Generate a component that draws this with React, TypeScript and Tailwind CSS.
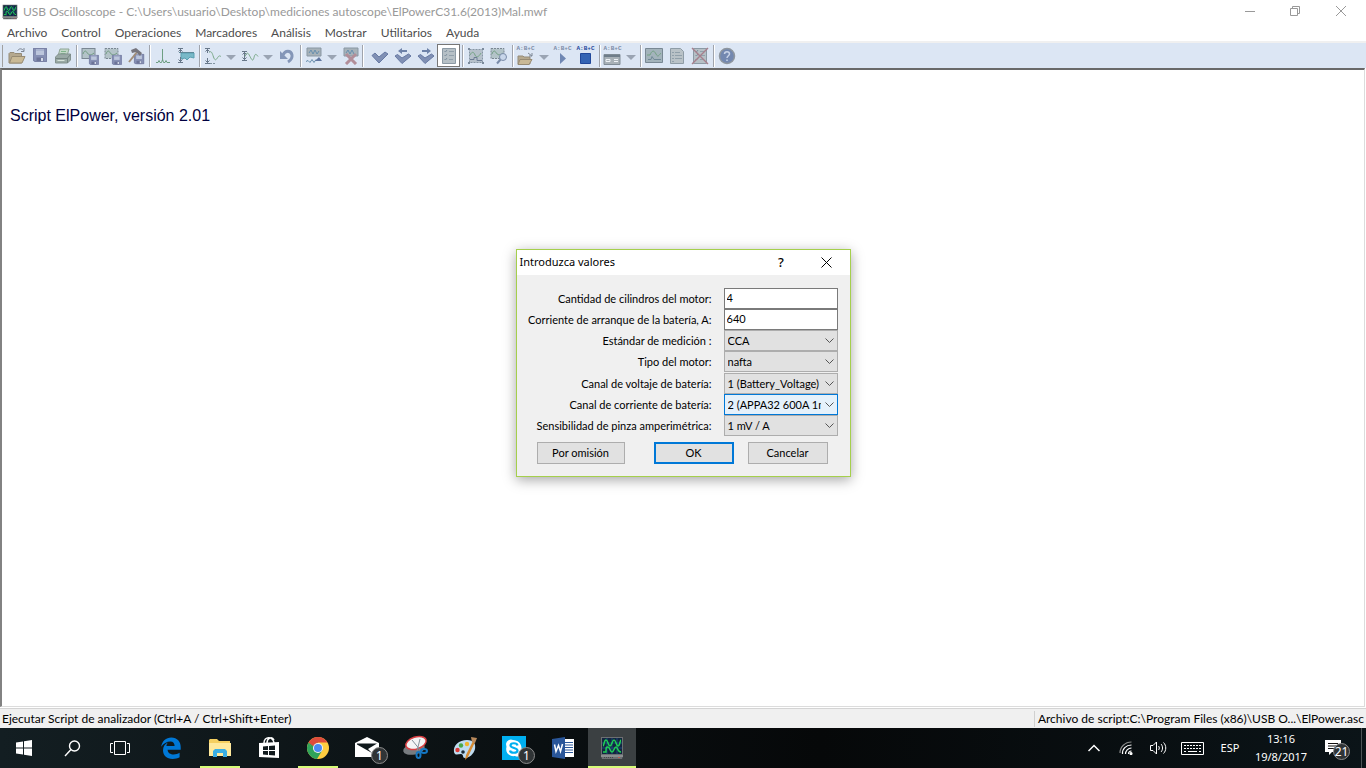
import { Fragment } from "react";
import type { ReactNode } from "react";

const menus = ["Archivo", "Control", "Operaciones", "Marcadores", "Análisis", "Mostrar", "Utilitarios", "Ayuda"];

/* ---------- toolbar drawings, 18x18 ---------- */

function Svg({ children }: { children: ReactNode }) {
  return (
    <svg viewBox="0 0 18 18" width="18" height="18" fill="none" aria-hidden="true">
      {children}
    </svg>
  );
}

const Floppy = ({ x = 0, y = 0, s = 1 }: { x?: number; y?: number; s?: number }) => (
  <g transform={`translate(${x} ${y}) scale(${s})`}>
    <path d="M0 0h14v14H1.5L0 12.500z" fill="#8690b4" />
    <path d="M3 0h8v7H3z" fill="#bcc6dc" />
    <path d="M3 2h8" stroke="#98a3c4" />
    <path d="M3.500 9.500h7V14h-7z" fill="#6c7498" />
    <path d="M8 10h2v3H8z" fill="#d5dbe9" />
    <path d="M.5.5h13v13H2L.5 12z" stroke="#7a82a6" />
  </g>
);

const Folder = () => (
  <g>
    <path d="M1 6.500l1-1h4l1 1h6.500V16H1z" fill="#b5a88e" stroke="#958b78" />
    <path d="M4 9.500h13L14 16H1.500z" fill="#c9b996" stroke="#978b74" />
  </g>
);

const Screen = ({ dashed = false }: { dashed?: boolean }) => (
  <g>
    <rect x="1" y="1.500" width="13" height="10" fill="#b3c3c8" stroke="#7a8793" strokeDasharray={dashed ? "2 1" : undefined} />
    <path d="M2 7c1-3 2.500-4 4-1.500S9.500 9 13 6" stroke="#6f9c80" />
  </g>
);

const Page = () => (
  <g>
    <path d="M2.500 1.500h13v15h-13z" fill="#b6c0c6" stroke="#8c9aa5" />
    <path d="M4.500 4l1 1 1.500-2M4.500 8l1 1 1.500-2M4.500 12l1 1 1.500-2" stroke="#7f909e" />
    <path d="M9 4.500h5M9 8.500h5M9 12.500h4" stroke="#91a0ab" />
  </g>
);

const Updown = ({ x = 3, top = 1, bottom = 16 }: { x?: number; top?: number; bottom?: number }) => (
  <path
    d={`M${x - 2} ${top + 0.5}h5M${x - 2} ${bottom + 0.5}h5M${x + 0.5} ${top}v5M${x + 0.5} ${bottom}v-5M${x - 1.5} ${top + 3.5}l2-2 2 2M${x - 1.5} ${bottom - 2.5}l2 2 2-2`}
    stroke="#68788a"
  />
);

const Check = ({ arrow }: { arrow?: "left" | "right" }) => (
  <g>
    <path
      d={arrow ? "M1 9l2.500-1.500L8 11l6.500-4L17 9l-9 7.500z" : "M1 8.500l3-2.500 4 4 6-5 3 2-9 9z"}
      fill="#8090b4"
      stroke="#6679a3"
    />
    {arrow === "left" && <path d="M4 4l4-3v2h5v2H8v2z" fill="#6e82a8" />}
    {arrow === "right" && <path d="M14 4l-4-3v2H5v2h5v2z" fill="#6e82a8" />}
  </g>
);

const icons: Record<string, ReactNode> = {
  open: (
    <Svg>
      <Folder />
      <path d="M9.500 4c1-2.500 4-3 6-.500M16 1v3.500h-3" stroke="#7d8694" />
    </Svg>
  ),
  save: (
    <Svg>
      <Floppy x={2} y={1} />
    </Svg>
  ),
  print: (
    <Svg>
      <path d="M6 2h9l-2 7H4z" fill="#c3d8c8" stroke="#8fa596" />
      <path d="M7 4.500h5M6.500 6.500h5" stroke="#80b48c" />
      <path d="M1.500 10l3-3h12v6l-3 3h-12z" fill="#9aaaa6" stroke="#82918f" />
      <path d="M2 11.500h11M13.500 16v-5l3-3.500" stroke="#758582" />
      <path d="M3.500 13.500h7" stroke="#d7e3dc" />
    </Svg>
  ),
  saveScreen: (
    <Svg>
      <Screen />
      <Floppy x={8} y={8} s={0.7} />
    </Svg>
  ),
  savePart: (
    <Svg>
      <Screen dashed />
      <Floppy x={8} y={8} s={0.7} />
    </Svg>
  ),
  saveTool: (
    <Svg>
      <Floppy x={7} y={7} s={0.72} />
      <path d="M10 5L2 15" stroke="#a28e78" strokeWidth="2" />
      <path d="M4 3l5-2 6 5-2 3-4-4-4 1z" fill="#76757d" />
    </Svg>
  ),
  spike: (
    <Svg>
      <path d="M2 15.500h2l1-2 1 2h1.500l1-3M8.500 2v12M8.500 12l1 3.500H11l1-2 1 2h3" stroke="#6e9f83" />
    </Svg>
  ),
  band: (
    <Svg>
      <path d="M4 6h13v5l-4-1-3 3-2-2-4 1z" fill="#79b9c8" stroke="#5ba0b2" />
      <path d="M2 5.500h15" stroke="#5d8898" />
      <Updown x={3} top={1} bottom={15} />
    </Svg>
  ),
  waveTall: (
    <Svg>
      <path d="M5 5.500c2-2 3 0 4 3s2 6 4 3 2-3 4-2" stroke="#79a987" />
      <path d="M6 16.500h6" stroke="#8295a2" strokeDasharray="2 1" />
      <Updown />
    </Svg>
  ),
  waveFlat: (
    <Svg>
      <path d="M4 9.500c2-5 3-4 5 0s3 5 4 1 2-4 4-1" stroke="#79a987" />
      <Updown x={3} top={4} bottom={13} />
    </Svg>
  ),
  undo: (
    <Svg>
      <path d="M5 8c2-5 8-5 9 0 .5 3.500-1.500 5.500-4 7" stroke="#8496b8" strokeWidth="3" />
      <path d="M2 4v8h8z" fill="#8496b8" />
    </Svg>
  ),
  marks: (
    <Svg>
      <path d="M2 1h14v8H2z" fill="#a7b2b9" stroke="#8997a3" />
      <path d="M4 6l2-3 2 4 2-4 2 4 2-3" stroke="#678faf" />
      <path d="M1 14.500l2-1 2 2 2-3 2 3 2-3" stroke="#668dac" />
      <path d="M10 14l4-4 3 4z" fill="#6076a0" />
    </Svg>
  ),
  marksOff: (
    <Svg>
      <path d="M2 1h14v8H2z" fill="#a7b2b9" stroke="#8997a3" />
      <path d="M4 6l2-3 2 4 2-4 2 4" stroke="#678faf" />
      <path d="M4 7l10 10M14 7L4 17" stroke="#b18e99" strokeWidth="3" />
    </Svg>
  ),
  check: (
    <Svg>
      <Check />
    </Svg>
  ),
  checkBack: (
    <Svg>
      <Check arrow="left" />
    </Svg>
  ),
  checkNext: (
    <Svg>
      <Check arrow="right" />
    </Svg>
  ),
  list: (
    <Svg>
      <Page />
    </Svg>
  ),
  frame: (
    <Svg>
      <path d="M2.500 2.500h13v13h-13z" fill="#b6c1cb" stroke="#8796a5" strokeDasharray="2 1" />
      <path d="M1 1h2v2H1zM15 1h2v2h-2zM1 15h2v2H1zM15 15h2v2h-2z" fill="#7c8b9c" />
      <path d="M3 8c2-4 4-3 5 0s4 2 6-2" stroke="#76a586" />
      <path d="M3 12.500h4v-2h3v3h5" stroke="#6d7d95" />
    </Svg>
  ),
  zoom: (
    <Svg>
      <Screen dashed />
      <circle cx="13" cy="10" r="3.500" fill="#c8d6ea" stroke="#7a8ca9" />
      <path d="M10.500 12.500L7 16.500" stroke="#7a8ca9" strokeWidth="2" />
    </Svg>
  ),
  view: (
    <Svg>
      <path d="M.5 1.500h17v14H.5z" fill="#a3b3bb" stroke="#798894" />
      <path d="M2 8h3c2-5 4-5 6-1s3 1 5-1" stroke="#73a183" />
      <path d="M3 12.500h3l1-3 2 3h7" stroke="#718997" />
    </Svg>
  ),
  report: (
    <Svg>
      <path d="M2.500 1.500h10l3 3v12h-13z" fill="#b9c2c7" stroke="#8e9ca6" />
      <path d="M4 5.500h2M7 5.500h5M4 8.500h2M7 8.500h7M4 11.500h2M7 11.500h7M4 14.500h2" stroke="#91a0aa" />
    </Svg>
  ),
  reportOff: (
    <Svg>
      <Page />
      <path d="M1 1l16 16M17 1L1 17" stroke="#a67f8d" strokeWidth="1.400" />
    </Svg>
  ),
  help: (
    <Svg>
      <circle cx="9" cy="9" r="7.500" fill="#7388b0" stroke="#8e969f" strokeWidth="1.500" />
      <path d="M6.500 7c0-3 5-3 5 0 0 1.500-2.500 2-2.500 4M9 12.500v1.500" stroke="#c8d3e7" strokeWidth="1.500" />
    </Svg>
  ),
};

const scriptIcons: Record<string, ReactNode> = {
  scriptOpen: (
    <>
      <path d="M2 4h5l1 1h6v7H2z" fill="#b5a88e" stroke="#958b78" />
      <path d="M4 7.500h12L13 12.500H2z" fill="#c9b996" stroke="#978b74" />
      <path d="M12 1l4 3M16 1v3h-3" stroke="#7d8694" />
    </>
  ),
  scriptPlay: <path d="M7 1l6 5.500L7 12z" fill="#6f87b3" />,
  scriptStop: <path d="M4.500 1.500h10v10h-10z" fill="#3464b4" stroke="#21489a" />,
  scriptPanel: (
    <>
      <path d="M1 2.500h16v10H1z" fill="#a8b1b7" stroke="#808c96" />
      <path d="M1 4h16" stroke="#6f7d89" strokeWidth="2" />
      <path d="M3 7.500h4v2H3zM11 7.500h4M11 9.500h4" stroke="#eef2f6" />
    </>
  ),
};

function ToolIcon({ name }: { name: string }) {
  if (!scriptIcons[name]) return <>{icons[name]}</>;
  return (
    <span className="flex flex-col items-center">
      <span
        className={`font-['Liberation_Mono'] text-[6px] leading-[6px] font-bold ${
          name === "scriptStop" ? "text-[#26479b]" : "text-[#7d8ca8]"
        }`}
      >
        A:B+C
      </span>
      <svg viewBox="0 0 18 13" width="18" height="13" fill="none" aria-hidden="true">
        {scriptIcons[name]}
      </svg>
    </span>
  );
}

type Tool = { id: string; label: string; drop?: boolean; pressed?: boolean };

const toolGroups: Tool[][] = [
  [
    { id: "open", label: "Abrir" },
    { id: "save", label: "Guardar" },
    { id: "print", label: "Imprimir" },
  ],
  [
    { id: "saveScreen", label: "Guardar pantalla" },
    { id: "savePart", label: "Guardar fragmento" },
    { id: "saveTool", label: "Guardar ajustes" },
  ],
  [
    { id: "spike", label: "Pico" },
    { id: "band", label: "Banda" },
  ],
  [
    { id: "waveTall", label: "Escala", drop: true },
    { id: "waveFlat", label: "Amplitud", drop: true },
    { id: "undo", label: "Deshacer" },
  ],
  [
    { id: "marks", label: "Marcadores", drop: true },
    { id: "marksOff", label: "Borrar marcadores" },
  ],
  [
    { id: "check", label: "Marcar" },
    { id: "checkBack", label: "Marca anterior" },
    { id: "checkNext", label: "Marca siguiente" },
    { id: "list", label: "Lista de marcas", pressed: true },
  ],
  [
    { id: "frame", label: "Encuadrar" },
    { id: "zoom", label: "Ampliar" },
  ],
  [
    { id: "scriptOpen", label: "Abrir script", drop: true },
    { id: "scriptPlay", label: "Ejecutar script" },
    { id: "scriptStop", label: "Detener script" },
  ],
  [{ id: "scriptPanel", label: "Panel de script", drop: true }],
  [
    { id: "view", label: "Ver gráfico" },
    { id: "report", label: "Informe" },
    { id: "reportOff", label: "Cerrar informe" },
  ],
  [{ id: "help", label: "Ayuda" }],
];

/* ---------- window chrome ---------- */

function ScopeLogo({ size }: { size: number }) {
  return (
    <svg viewBox="0 0 24 24" width={size} height={size} fill="none" aria-hidden="true">
      <path d="M1 1h22v19l-1 3H2l-1-3z" fill="#6c6f72" />
      <path d="M1 19h22v2H1z" fill="#8b8e90" />
      <path d="M2 2h20v16H2z" fill="#12263f" />
      <path d="M2 7h20M2 12h20M7 2v16M12 2v16M17 2v16" stroke="#2360a0" strokeWidth=".6" />
      <path d="M3 10c1 0 1-6 3-6s2 6 4 6 2-6 4-6 2 6 4 6 2-6 3-6" stroke="#1fd055" strokeWidth="1.500" />
      <path d="M3 16h3c0-5 0-5 2-5s2 5 4 5 2-5 4-5 1 5 5 5" stroke="#1fd055" strokeWidth="1.500" />
      <path d="M4 21.500h10" stroke="#45484a" strokeDasharray="1 1" />
      <path d="M18 21.500h2" stroke="#c05a50" />
    </svg>
  );
}

function TitleBar() {
  return (
    <div className="flex h-6 items-center justify-between pl-[2px]">
      <div className="flex items-center gap-[5px]">
        <ScopeLogo size={16} />
        <h1 className="text-[12px] leading-4 text-[#999]">
          USB Oscilloscope - C:\Users\usuario\Desktop\mediciones autoscope\ElPowerC31.6(2013)Mal.mwf
        </h1>
      </div>
      <div className="flex pr-px pb-[3px]">
        <button aria-label="Minimizar" className="flex h-5 w-[46px] items-center justify-center">
          <svg width="10" height="10" fill="none" stroke="#999">
            <path d="M0 5.500h10" />
          </svg>
        </button>
        <button aria-label="Restaurar" className="flex h-5 w-[44px] items-center justify-center">
          <svg width="10" height="10" fill="none" stroke="#999">
            <path d="M.5 2.500h7v7h-7zM2.500 2.500v-2h7v7h-2" />
          </svg>
        </button>
        <button aria-label="Cerrar" className="flex h-5 w-12 items-center justify-center">
          <svg width="10" height="10" fill="none" stroke="#999">
            <path d="M0 0l10 10M10 0L0 10" />
          </svg>
        </button>
      </div>
    </div>
  );
}

function Toolbar() {
  return (
    <div className="flex h-[27px] items-center border-t-2 border-[#f0f0f0] bg-[#dce6f4] pl-[2px]">
      <span className="mr-[2px] h-[22px] w-px bg-[#a0a0a0]" />
      {toolGroups.map((group, idx) => (
        <Fragment key={idx}>
          {idx > 0 && (
            <span className={`flex h-[22px] justify-end ${idx === 5 ? "w-[6px] pr-1" : "w-1"}`}>
              <span className="w-[2px] border-r border-l border-l-[#a0a4ac] border-r-white" />
            </span>
          )}
          {group.map((tool) => (
            <Fragment key={tool.id}>
              <button
                aria-label={tool.label}
                className={`flex h-[23px] w-[23px] items-center justify-center ${
                  tool.pressed ? "border border-[#777] bg-white" : ""
                }`}
              >
                <ToolIcon name={tool.id} />
              </button>
              {tool.drop && (
                <button aria-label={`${tool.label}, opciones`} className="flex h-[23px] w-[14px] items-center justify-center pt-1">
                  <svg width="10" height="5" fill="#9aa4b3">
                    <path d="M0 0h10L5 5z" />
                  </svg>
                </button>
              )}
            </Fragment>
          ))}
        </Fragment>
      ))}
    </div>
  );
}

/* ---------- dialog ---------- */

type Field = { id: string; label: string; value: string; kind: "text" | "select"; focused?: boolean };

const fieldGroups: Field[][] = [
  [
    { id: "cilindros", label: "Cantidad de cilindros del motor:", value: "4", kind: "text" },
    { id: "arranque", label: "Corriente de arranque de la batería, A:", value: "640", kind: "text" },
    { id: "estandar", label: "Estándar de medición :", value: "CCA", kind: "select" },
    { id: "tipo", label: "Tipo del motor:", value: "nafta", kind: "select" },
  ],
  [
    { id: "voltaje", label: "Canal de voltaje de batería:", value: "1 (Battery_Voltage)", kind: "select" },
    { id: "corriente", label: "Canal de corriente de batería:", value: "2 (APPA32 600A 1mV/A)", kind: "select", focused: true },
    { id: "pinza", label: "Sensibilidad de pinza amperimétrica:", value: "1 mV / A", kind: "select" },
  ],
];

function FieldRow({ field }: { field: Field }) {
  return (
    <div className="flex h-[21px] items-center justify-end gap-3">
      <label htmlFor={field.id} className="whitespace-nowrap">
        {field.label}
      </label>
      {field.kind === "text" ? (
        <input
          id={field.id}
          defaultValue={field.value}
          className="h-[21px] w-[114px] border border-[#7a7a7a] bg-white px-[2px] pb-[2px] outline-none"
        />
      ) : (
        <div className="relative w-[114px]">
          <select
            id={field.id}
            defaultValue={field.value}
            className={`block h-[21px] w-full appearance-none border pr-4 pl-[3px] outline-none ${
              field.focused ? "border-[#0078d7] bg-[#e5f1fb]" : "border-[#adadad] bg-[#e1e1e1]"
            }`}
          >
            <option>{field.value}</option>
          </select>
          <svg
            width="9"
            height="6"
            fill="none"
            stroke="#555"
            className="pointer-events-none absolute top-2 right-1"
          >
            <path d="M.5.5l4 4 4-4" />
          </svg>
        </div>
      )}
    </div>
  );
}

function ValuesDialog() {
  return (
    <form
      role="dialog"
      aria-labelledby="dialog-title"
      onSubmit={(e) => e.preventDefault()}
      className="w-[335px] border border-[#a5cf4c] bg-[#f0f0f0] text-[11px] leading-4 text-black shadow-[0_3px_12px_rgba(0,0,0,0.35)]"
    >
      <div className="flex h-[25px] items-center justify-between bg-white pb-px pl-[3px] font-['Noto_Sans',sans-serif]">
        <h2 id="dialog-title" className="text-[11px]">
          Introduzca valores
        </h2>
        <div className="flex">
          <button type="button" aria-label="Ayuda" className="w-[45px] text-[13px] font-medium">
            ?
          </button>
          <button type="button" aria-label="Cerrar" className="flex w-[46px] items-center justify-center">
            <svg width="11" height="11" fill="none" stroke="black">
              <path d="M.5.5l10 10M10.500.5l-10 10" />
            </svg>
          </button>
        </div>
      </div>

      <div className="flex flex-col gap-px pt-[13px] pr-3">
        {fieldGroups.map((group, idx) => (
          <div key={idx}>
            {group.map((field) => (
              <FieldRow key={field.id} field={field} />
            ))}
          </div>
        ))}
      </div>

      <div className="flex pt-[6px] pb-3 pl-5">
        <button type="button" className="h-[22px] w-[88px] border border-[#adadad] bg-[#e1e1e1]">
          Por omisión
        </button>
        <button type="submit" className="ml-[29px] h-[22px] w-20 border-2 border-[#0078d7] bg-[#e1e1e1]">
          OK
        </button>
        <button type="button" className="ml-[14px] h-[22px] w-20 border border-[#adadad] bg-[#e1e1e1]">
          Cancelar
        </button>
      </div>
    </form>
  );
}

/* ---------- taskbar ---------- */

type App = { name: string; icon: ReactNode; badge?: string; state?: "running" | "active" };

const apps: App[] = [
  {
    name: "Microsoft Edge",
    icon: (
      <svg viewBox="0 0 24 24" width="24" height="24" fill="#0078d7">
        <path d="M2.200 10.800C3 5 7 1.500 12.300 1.500c6 0 9.400 4.300 9.400 9.500v2.800H8.600c.2 3.400 3 4.700 6 4.700 2.400 0 4.200-.6 6-1.700v4.400c-2 1.100-4.300 1.700-7 1.700-6 0-9.600-3.500-9.600-8.700 0-3.500 1.900-6.200 5-7.700-1 1-1.500 2.300-1.600 3.600h8.200c0-3-1.400-4.700-4.200-4.700-3.700 0-7 2-9.200 5.400z" />
      </svg>
    ),
  },
  {
    name: "Explorador de archivos",
    state: "running",
    icon: (
      <svg viewBox="0 0 24 24" width="24" height="24">
        <path d="M1 4l1-1h7l2 2h11v15H1z" fill="#f5cf60" />
        <path d="M1 7h22v13H1z" fill="#ffe99c" />
        <path d="M5 21v-6l2-2h10l2 2v6h-4v-4H9v4z" fill="#3aaee4" />
      </svg>
    ),
  },
  {
    name: "Tienda",
    icon: (
      <svg viewBox="0 0 24 24" width="24" height="24" fill="none">
        <path d="M7 7c0-7 9-7 10 0M10 7c0-5 5-7 7-3" stroke="#fff" strokeWidth="1.500" />
        <path d="M2 7l20-1v16L2 21z" fill="#fff" />
        <path d="M6 10.500l5-.5v4H6zM12 10l6-.5V14h-6zM6 15h5v4l-5-.5zM12 15h6v4.500L12 19z" fill="#111a1d" />
      </svg>
    ),
  },
  {
    name: "Google Chrome",
    state: "running",
    icon: (
      <svg viewBox="0 0 24 24" width="24" height="24">
        <circle cx="12" cy="12" r="11" fill="#ffcd40" />
        <path d="M2.500 6.500A11 11 0 0 0 11 23l5.500-9H7.500z" fill="#2fa35a" />
        <path d="M2.500 6.500l4.500 8 5-3V6.500z" fill="#2fa35a" />
        <path d="M2.500 6.500A11 11 0 0 1 21.500 6.500H12L7 10z" fill="#de4c3c" />
        <circle cx="12" cy="12" r="5" fill="#f4f4f4" />
        <circle cx="12" cy="12" r="4" fill="#4a8af4" />
      </svg>
    ),
  },
  {
    name: "Correo",
    badge: "1",
    icon: (
      <svg viewBox="0 0 24 24" width="24" height="24" className="overflow-visible">
        <path d="M0 7l12-6 12 6v14H0z" fill="#fff" />
        <path d="M2 7.500h20l-9 5.500 4 4L2 8.500z" fill="#10191c" />
      </svg>
    ),
  },
  {
    name: "Recortes",
    icon: (
      <svg viewBox="0 0 24 24" width="24" height="24" fill="none" className="overflow-visible">
        <ellipse cx="10" cy="13" rx="11" ry="5.500" fill="#777c80" transform="rotate(-12 10 13)" />
        <ellipse cx="12" cy="7" rx="10.500" ry="6" fill="#f3f4f6" stroke="#d83f43" strokeWidth="1.500" transform="rotate(-18 12 7)" />
        <path d="M8 4l9 11M16 3l-3 12" stroke="#84909a" />
        <ellipse cx="20" cy="15" rx="3" ry="2" stroke="#1477c4" strokeWidth="2" />
        <ellipse cx="14.500" cy="19" rx="2" ry="3" stroke="#1477c4" strokeWidth="2" />
      </svg>
    ),
  },
  {
    name: "Paint",
    icon: (
      <svg viewBox="0 0 24 24" width="24" height="24" className="overflow-visible">
        <path d="M1 16C0 9 6 4 14 4c7 0 9 4 8 9s-6 9-10 9c-3 0-1-4-4-4s-6 2-7-2z" fill="#bfdcf0" />
        <circle cx="4.500" cy="14" r="2.200" fill="#d93a38" />
        <circle cx="8" cy="9.500" r="2.200" fill="#49a848" />
        <circle cx="14" cy="8" r="2.200" fill="#f0b42c" />
        <circle cx="10" cy="16" r="1.800" fill="#1a2a34" />
        <path d="M20 5l2 1-7 15-3 3 1-5z" fill="#d68b32" />
        <path d="M18 1l6 1-2 5-3-1z" fill="#b98a5c" />
      </svg>
    ),
  },
  {
    name: "Skype",
    badge: "1",
    icon: (
      <svg viewBox="0 0 24 24" width="24" height="24" fill="none">
        <path d="M0 0h24v24H0z" fill="#00aff0" />
        <path d="M4 8a5 5 0 0 1 7-4c5 0 9 4 8.500 9A5 5 0 0 1 13 20C7 21 3 16 4.500 11z" fill="#fff" />
        <path d="M15.500 9.500C15 6.500 8.500 6.500 8.500 9.500c0 3 7 2 7 5s-7 3-7.500 0" stroke="#00aff0" strokeWidth="2.200" />
      </svg>
    ),
  },
  {
    name: "Word",
    icon: (
      <svg viewBox="0 0 24 24" width="24" height="24" fill="none">
        <path d="M12 3h11v18H12z" fill="#fff" />
        <path d="M14 6.500h8M14 9h8M14 11.500h8M14 14h8M14 16.500h8" stroke="#2a5699" />
        <path d="M1 3L14 1v22L1 21z" fill="#2a5699" />
        <path d="M3.500 8.500l1.500 7 2.500-6 2 6 2-7.500" stroke="#fff" strokeWidth="1.500" />
      </svg>
    ),
  },
  { name: "USB Oscilloscope", state: "active", icon: <ScopeLogo size={24} /> },
];

function Badge({ children }: { children: ReactNode }) {
  return (
    <span className="absolute -right-[9px] -bottom-1 flex h-[17px] w-[17px] items-center justify-center rounded-full border border-[#8b8b8b] bg-[#303436] text-[12px] leading-none text-white">
      {children}
    </span>
  );
}

function Taskbar() {
  return (
    <footer className="flex h-10 items-stretch justify-between bg-linear-to-r from-[#131e22] via-[#060809] via-60% to-[#0b1418] font-['Noto_Sans',sans-serif] text-white">
      <nav className="flex">
        <button aria-label="Inicio" className="flex w-12 items-center justify-center">
          <svg width="16" height="16" fill="#fff">
            <path d="M0 2.500L7 1.500v6H0zM8 1.300L16 0v7.500H8zM0 8.500h7v6l-7-1zM8 8.500h8V16l-8-1.300z" />
          </svg>
        </button>
        <button aria-label="Buscar" className="flex w-12 items-center justify-center">
          <svg width="17" height="17" fill="none" stroke="#fff" strokeWidth="1.400">
            <circle cx="10.500" cy="6" r="5" />
            <path d="M7 9.500L1 16" />
          </svg>
        </button>
        <button aria-label="Vista de tareas" className="mr-[3px] flex w-12 items-center justify-center">
          <svg width="20" height="14" fill="none" stroke="#fff">
            <path d="M4.500.5h11v13h-11zM3 2.500H.5v9H3M17 2.500h2.500v9H17" />
          </svg>
        </button>
        <div className="flex gap-px">
          {apps.map((app) => (
            <button
              key={app.name}
              aria-label={app.name}
              className={`relative flex w-12 items-center justify-center ${app.state === "active" ? "bg-[#3b4042]" : ""}`}
            >
              <span className="relative">
                {app.icon}
                {app.badge && <Badge>{app.badge}</Badge>}
              </span>
              {app.state && (
                <span
                  className={`absolute bottom-0 h-[2px] bg-[#d6fb78] ${app.state === "active" ? "inset-x-0" : "inset-x-1"}`}
                />
              )}
            </button>
          ))}
        </div>
      </nav>

      <div className="flex items-center pr-1 text-[11px] leading-[18px]">
        <button aria-label="Iconos ocultos" className="flex w-8 justify-center">
          <svg width="12" height="8" fill="none" stroke="#fff" strokeWidth="1.500">
            <path d="M.5 7L6 1.500 11.500 7" />
          </svg>
        </button>
        <button aria-label="Red" className="flex w-8 justify-center">
          <svg width="14" height="14" fill="none" stroke="#fff" strokeWidth="1.200">
            <path d="M1 12C1 6 6 1 12.500 1" stroke="#8c8c8c" />
            <path d="M3.500 13C3 8 7 4 12.500 4M6.500 13c0-3 2.500-6 6-6M9.500 13c0-2 1-3 3-3" />
            <circle cx="12" cy="12.500" r="1" fill="#fff" />
          </svg>
        </button>
        <button aria-label="Volumen" className="flex w-8 justify-center">
          <svg width="17" height="14" fill="none" stroke="#fff">
            <path d="M.5 4.500H3L6.500 1v12L3 9.500H.5zM8.500 5c1 1 1 3 0 4M11 3c2 2 2 6 0 8M13.500 1.500c3 3 3 8 0 11" />
          </svg>
        </button>
        <button aria-label="Teclado" className="flex w-9 justify-center">
          <svg width="23" height="13" fill="none" stroke="#fff">
            <path d="M.5.5h22v12H.5z" />
            <path d="M3 3.500h17M3 6.500h17" strokeDasharray="2 1" />
            <path d="M3 9.500h2M7 9.500h9M18 9.500h2" />
          </svg>
        </button>
        <button className="w-10">ESP</button>
        <button className="w-[62px] whitespace-nowrap">
          <time dateTime="2017-08-19T13:16" className="block">
            13:16
            <br />
            19/8/2017
          </time>
        </button>
        <button aria-label="Centro de actividades" className="flex h-full w-[50px] items-center justify-center border-r border-[#4d5456] pr-[7px]">
          <span className="relative">
            <svg width="16" height="16" fill="#fff">
              <path d="M0 0h16v12H7l-3 3v-3H0z" />
              <path d="M3 3.500h10M3 6h10M3 8.500h7" stroke="#111" />
            </svg>
            <Badge>21</Badge>
          </span>
        </button>
      </div>
    </footer>
  );
}

export default function App() {
  return (
    <div className="flex min-h-screen flex-col bg-white font-[Lato,sans-serif]">
      <div className="relative flex grow flex-col">
        <TitleBar />
        <nav className="flex h-[17px] items-center gap-[14px] pl-[7px] text-[12px] leading-4 text-[#4c4c4c]">
          {menus.map((menu) => (
            <button key={menu}>{menu}</button>
          ))}
        </nav>
        <Toolbar />

        <main className="mr-px grow border-t-2 border-r border-b border-l-2 border-t-[#696969] border-r-[#dcdcdc] border-b-[#dcdcdc] border-l-[#828282] pt-9 pl-2">
          <p className="font-['Liberation_Sans',sans-serif] text-base leading-5 text-[#000040]">Script ElPower, versión 2.01</p>
        </main>

        <div className="mt-px flex h-5 items-center justify-between border-t border-[#d4d4d4] bg-[#f0f0f0] px-[2px] pt-px text-[12px] leading-4 text-black">
          <span>Ejecutar Script de analizador (Ctrl+A / Ctrl+Shift+Enter)</span>
          <span className="border-l border-[#d0d0d0] pl-[3px]">Archivo de script:C:\Program Files (x86)\USB O...\ElPower.asc</span>
        </div>

        <div className="absolute inset-0 flex items-center justify-center pb-[2px]">
          <ValuesDialog />
        </div>
      </div>
      <Taskbar />
    </div>
  );
}
